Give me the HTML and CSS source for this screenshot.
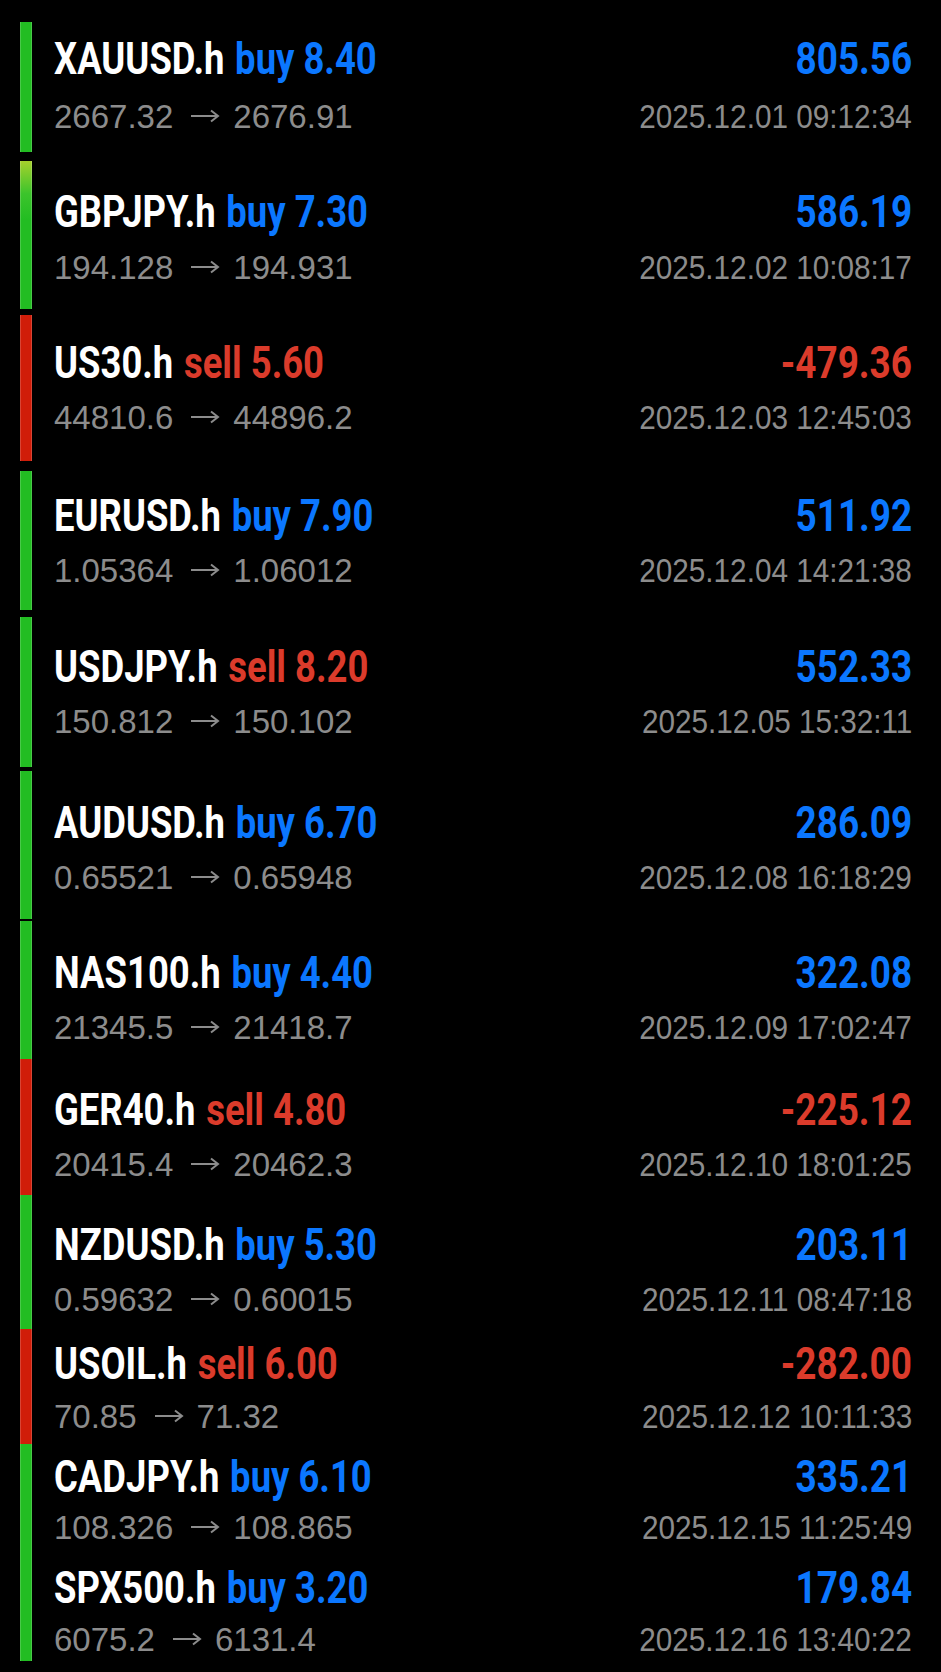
FILE: index.html
```html
<!DOCTYPE html>
<html lang="en">
<head>
    <meta charset="UTF-8">
    <meta name="viewport" content="width=device-width, initial-scale=1.0">
    <title>Closed Positions</title>
    <link rel="stylesheet" href="styles.css">
</head>
<body>
    <div class="history">
        <div class="trade">
            <div class="bar profit"></div>
            <div class="info">
                <div class="head"><span class="title"><span>XAUUSD.h</span> <span class="side buy">buy 8.40</span></span><span class="amount buy">805.56</span></div>
                <div class="sub"><span class="prices">2667.32<svg class="arrow" viewBox="0 0 30 14"><path d="M1 7H28M21 1.5L28 7L21 12.5"/></svg>2676.91</span><span class="date">2025.12.01 09:12:34</span></div>
            </div>
        </div>
        <div class="trade">
            <div class="bar profit fresh"></div>
            <div class="info">
                <div class="head"><span class="title"><span>GBPJPY.h</span> <span class="side buy">buy 7.30</span></span><span class="amount buy">586.19</span></div>
                <div class="sub"><span class="prices">194.128<svg class="arrow" viewBox="0 0 30 14"><path d="M1 7H28M21 1.5L28 7L21 12.5"/></svg>194.931</span><span class="date">2025.12.02 10:08:17</span></div>
            </div>
        </div>
        <div class="trade">
            <div class="bar loss"></div>
            <div class="info">
                <div class="head"><span class="title"><span>US30.h</span> <span class="side sell">sell 5.60</span></span><span class="amount sell">-479.36</span></div>
                <div class="sub"><span class="prices">44810.6<svg class="arrow" viewBox="0 0 30 14"><path d="M1 7H28M21 1.5L28 7L21 12.5"/></svg>44896.2</span><span class="date">2025.12.03 12:45:03</span></div>
            </div>
        </div>
        <div class="trade">
            <div class="bar profit"></div>
            <div class="info">
                <div class="head"><span class="title"><span>EURUSD.h</span> <span class="side buy">buy 7.90</span></span><span class="amount buy">511.92</span></div>
                <div class="sub"><span class="prices">1.05364<svg class="arrow" viewBox="0 0 30 14"><path d="M1 7H28M21 1.5L28 7L21 12.5"/></svg>1.06012</span><span class="date">2025.12.04 14:21:38</span></div>
            </div>
        </div>
        <div class="trade">
            <div class="bar profit"></div>
            <div class="info">
                <div class="head"><span class="title"><span>USDJPY.h</span> <span class="side sell">sell 8.20</span></span><span class="amount buy">552.33</span></div>
                <div class="sub"><span class="prices">150.812<svg class="arrow" viewBox="0 0 30 14"><path d="M1 7H28M21 1.5L28 7L21 12.5"/></svg>150.102</span><span class="date">2025.12.05 15:32:11</span></div>
            </div>
        </div>
        <div class="trade">
            <div class="bar profit"></div>
            <div class="info">
                <div class="head"><span class="title"><span>AUDUSD.h</span> <span class="side buy">buy 6.70</span></span><span class="amount buy">286.09</span></div>
                <div class="sub"><span class="prices">0.65521<svg class="arrow" viewBox="0 0 30 14"><path d="M1 7H28M21 1.5L28 7L21 12.5"/></svg>0.65948</span><span class="date">2025.12.08 16:18:29</span></div>
            </div>
        </div>
        <div class="trade">
            <div class="bar profit"></div>
            <div class="info">
                <div class="head"><span class="title"><span>NAS100.h</span> <span class="side buy">buy 4.40</span></span><span class="amount buy">322.08</span></div>
                <div class="sub"><span class="prices">21345.5<svg class="arrow" viewBox="0 0 30 14"><path d="M1 7H28M21 1.5L28 7L21 12.5"/></svg>21418.7</span><span class="date">2025.12.09 17:02:47</span></div>
            </div>
        </div>
        <div class="trade">
            <div class="bar loss"></div>
            <div class="info">
                <div class="head"><span class="title"><span>GER40.h</span> <span class="side sell">sell 4.80</span></span><span class="amount sell">-225.12</span></div>
                <div class="sub"><span class="prices">20415.4<svg class="arrow" viewBox="0 0 30 14"><path d="M1 7H28M21 1.5L28 7L21 12.5"/></svg>20462.3</span><span class="date">2025.12.10 18:01:25</span></div>
            </div>
        </div>
        <div class="trade">
            <div class="bar profit"></div>
            <div class="info">
                <div class="head"><span class="title"><span>NZDUSD.h</span> <span class="side buy">buy 5.30</span></span><span class="amount buy">203.11</span></div>
                <div class="sub"><span class="prices">0.59632<svg class="arrow" viewBox="0 0 30 14"><path d="M1 7H28M21 1.5L28 7L21 12.5"/></svg>0.60015</span><span class="date">2025.12.11 08:47:18</span></div>
            </div>
        </div>
        <div class="trade">
            <div class="bar loss"></div>
            <div class="info">
                <div class="head"><span class="title"><span>USOIL.h</span> <span class="side sell">sell 6.00</span></span><span class="amount sell">-282.00</span></div>
                <div class="sub"><span class="prices">70.85<svg class="arrow" viewBox="0 0 30 14"><path d="M1 7H28M21 1.5L28 7L21 12.5"/></svg>71.32</span><span class="date">2025.12.12 10:11:33</span></div>
            </div>
        </div>
        <div class="trade">
            <div class="bar profit"></div>
            <div class="info">
                <div class="head"><span class="title"><span>CADJPY.h</span> <span class="side buy">buy 6.10</span></span><span class="amount buy">335.21</span></div>
                <div class="sub"><span class="prices">108.326<svg class="arrow" viewBox="0 0 30 14"><path d="M1 7H28M21 1.5L28 7L21 12.5"/></svg>108.865</span><span class="date">2025.12.15 11:25:49</span></div>
            </div>
        </div>
        <div class="trade">
            <div class="bar profit"></div>
            <div class="info">
                <div class="head"><span class="title"><span>SPX500.h</span> <span class="side buy">buy 3.20</span></span><span class="amount buy">179.84</span></div>
                <div class="sub"><span class="prices">6075.2<svg class="arrow" viewBox="0 0 30 14"><path d="M1 7H28M21 1.5L28 7L21 12.5"/></svg>6131.4</span><span class="date">2025.12.16 13:40:22</span></div>
            </div>
        </div>
    </div>
</body>
</html>
```
FILE: styles.css
```css
body {
    margin: 0;
    background-color: black;
    color: white;
    font-family: "Liberation Sans", Arial, sans-serif;
}
.history {
    padding: 22px 0 11px 20px;
}
.trade {
    display: flex;
    height: 146px;
}
.bar {
    flex: none;
    width: 12px;
    box-shadow: inset 1px 0 rgba(255, 255, 255, 0.18), inset -1px 0 rgba(255, 255, 255, 0.18);
}
.bar.profit {
    background-color: #22bd22;
}
.bar.fresh {
    background: linear-gradient(#a6d12c, #3cc42c 22%, #22bd22 40%);
}
.bar.loss {
    background-color: #d01d09;
}
.info {
    flex: 1;
    display: flex;
    flex-direction: column;
    justify-content: center;
    padding: 0 29px 0 22px;
}
.head, .sub {
    display: flex;
    justify-content: space-between;
    align-items: baseline;
    white-space: nowrap;
}
.head {
    font-family: Roboto, "Liberation Sans", sans-serif;
    font-weight: 700;
    font-size: 45px;
    line-height: 54px;
}
.title {
    display: inline-block;
    transform: scaleX(0.81);
    transform-origin: left;
}
.side {
    margin-left: 2px;
}
.amount {
    display: inline-block;
    transform: scaleX(0.82);
    transform-origin: right;
}
.buy {
    color: #0b77ff;
}
.sell {
    color: #db3b2b;
}
.sub {
    margin-top: 6px;
    font-size: 33px;
    line-height: 44px;
    color: #8c8c8c;
}
.arrow {
    width: 30px;
    height: 14px;
    margin: 0 13px 0 17px;
    vertical-align: 5px;
    fill: none;
    stroke: #8c8c8c;
    stroke-width: 2;
}
.date {
    display: inline-block;
    transform: scaleX(0.9);
    transform-origin: right;
}

/* row heights shrink toward the bottom of the list */
.trade:nth-child(1) { height: 130px; margin-bottom: 9px; }
.trade:nth-child(1) .info { padding-bottom: 4px; }
.trade:nth-child(1) .sub { margin-top: 9px; }
.trade:nth-child(2) { height: 148px; margin-bottom: 6px; }
.trade:nth-child(2) .info { padding-top: 5px; }
.trade:nth-child(2) .sub { margin-top: 7px; }
.trade:nth-child(3) { height: 146px; margin-bottom: 10px; }
.trade:nth-child(4) { height: 139px; margin-bottom: 7px; }
.trade:nth-child(5) { height: 150px; margin-bottom: 4px; }
.trade:nth-child(6) { height: 148px; margin-bottom: 2px; }
.trade:nth-child(6) .info { padding-top: 5px; }
.trade:nth-child(7) { height: 138px; }
.trade:nth-child(8) { height: 136px; }
.trade:nth-child(9) { height: 134px; }
.trade:nth-child(7) .info,
.trade:nth-child(8) .info,
.trade:nth-child(9) .info { padding-top: 15px; }
.trade:nth-child(10) { height: 115px; }
.trade:nth-child(10) .info { padding-top: 3px; }
.trade:nth-child(10) .sub { margin-top: 4px; }
.trade:nth-child(11) { height: 111px; }
.trade:nth-child(11) .sub { margin-top: 2px; }
.trade:nth-child(12) { height: 106px; }
.trade:nth-child(12) .info { padding-top: 6px; }
.trade:nth-child(12) .sub { margin-top: 3px; }
```
